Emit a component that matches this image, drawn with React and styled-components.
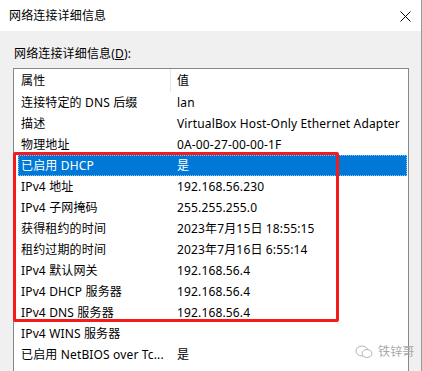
import React from "react";
import styled, { createGlobalStyle } from "styled-components";

const Global = createGlobalStyle`
  html, body { margin: 0; padding: 0; background: #ffffff; }
  body { font-family: "Noto Sans", "Noto Sans CJK SC", sans-serif; }
`;

const FONT = `"Noto Sans", "Noto Sans CJK SC", sans-serif`;

const Window = styled.div`
  position: relative;
  width: 421px;
  height: 371px;
  border-right: 1px solid #9a9a9a;
  display: flex;
  flex-direction: column;
  overflow: hidden;
  font-family: ${FONT};
  font-size: 12px;
  letter-spacing: 0.15px;
  color: #000;
`;

const TitleBar = styled.div`
  height: 31px;
  flex: none;
  background: #fff;
  display: flex;
  align-items: center;
  justify-content: space-between;
  padding: 0 10px 0 9px;
`;

const Title = styled.span`
  font-size: 12px;
  line-height: 16px;
  padding-top: 1px;
`;

const CloseButton = styled.div`
  width: 12px;
  height: 12px;
  display: flex;
  align-items: center;
  justify-content: center;
  margin-top: 1px;
`;

const Body = styled.div`
  flex: 1;
  background: #f0f0f0;
  padding: 15px 12px 0 13px;
  display: flex;
  flex-direction: column;
  min-height: 0;
`;

const Label = styled.div`
  line-height: 16px;
  height: 16px;
  margin-bottom: 6px;
  padding-left: 1px;
`;

const ListBox = styled.div`
  flex: 1;
  background: #fff;
  border: 1px solid #828790;
  border-bottom: none;
  display: flex;
  flex-direction: column;
`;

const HeaderRow = styled.div`
  height: 23px;
  display: grid;
  grid-template-columns: 157px 1fr;
`;

const HeaderCell = styled.div`
  line-height: 23px;
  padding-left: ${(p) => (p.$first ? "7px" : "6px")};
  border-right: ${(p) => (p.$first ? "1px solid #e5e5e5" : "none")};
`;

const Row = styled.div`
  height: 21px;
  margin: 0 1px 0 4px;
  display: grid;
  grid-template-columns: 153px 1fr;
  background: ${(p) => (p.$selected ? "#0078d7" : "transparent")};
  color: ${(p) => (p.$selected ? "#fff" : "#000")};
  outline: ${(p) => (p.$selected ? "1px dotted #8cc4f0" : "none")};
  outline-offset: -1px;
`;

const Cell = styled.div`
  line-height: 21px;
  white-space: nowrap;
  padding-left: ${(p) => (p.$first ? "3px" : "6px")};
`;

const Highlight = styled.div`
  position: absolute;
  left: 13px;
  top: 152px;
  width: 326px;
  height: 170px;
  box-sizing: border-box;
  border: 3px solid #f31b1b;
  border-radius: 2px;
  pointer-events: none;
`;

const Watermark = styled.div`
  position: absolute;
  left: 355px;
  top: 344px;
  display: flex;
  align-items: center;
  gap: 5px;
  color: #a8a8a8;
  font-size: 12px;
  line-height: 16px;
`;

const rows = [
  ["连接特定的 DNS 后缀", "lan"],
  ["描述", "VirtualBox Host-Only Ethernet Adapter"],
  ["物理地址", "0A-00-27-00-00-1F"],
  ["已启用 DHCP", "是", true],
  ["IPv4 地址", "192.168.56.230"],
  ["IPv4 子网掩码", "255.255.255.0"],
  ["获得租约的时间", "2023年7月15日 18:55:15"],
  ["租约过期的时间", "2023年7月16日 6:55:14"],
  ["IPv4 默认网关", "192.168.56.4"],
  ["IPv4 DHCP 服务器", "192.168.56.4"],
  ["IPv4 DNS 服务器", "192.168.56.4"],
  ["IPv4 WINS 服务器", ""],
  ["已启用 NetBIOS over Tc...", "是"],
];

export default function App() {
  return (
    <>
      <Global />
      <Window>
        <TitleBar>
          <Title>网络连接详细信息</Title>
          <CloseButton>
            <svg width="11" height="11" viewBox="0 0 11 11">
              <path d="M0.5 0.5 L10.5 10.5 M10.5 0.5 L0.5 10.5" stroke="#000" strokeWidth="1" fill="none" />
            </svg>
          </CloseButton>
        </TitleBar>
        <Body>
          <Label>
            网络连接详细信息(<u>D</u>):
          </Label>
          <ListBox>
            <HeaderRow>
              <HeaderCell $first>属性</HeaderCell>
              <HeaderCell>值</HeaderCell>
            </HeaderRow>
            {rows.map(([k, v, sel]) => (
              <Row key={k} $selected={!!sel}>
                <Cell $first>{k}</Cell>
                <Cell>{v}</Cell>
              </Row>
            ))}
          </ListBox>
        </Body>
        <Highlight />
        <Watermark>
          <svg width="18" height="14" viewBox="0 0 18 14">
            <ellipse cx="7" cy="6" rx="6" ry="5" fill="none" stroke="#b5b5b5" strokeWidth="1" />
            <ellipse cx="12" cy="8.5" rx="5" ry="4" fill="#fff" stroke="#b5b5b5" strokeWidth="1" />
          </svg>
          <span>铁锌哥</span>
        </Watermark>
      </Window>
    </>
  );
}
